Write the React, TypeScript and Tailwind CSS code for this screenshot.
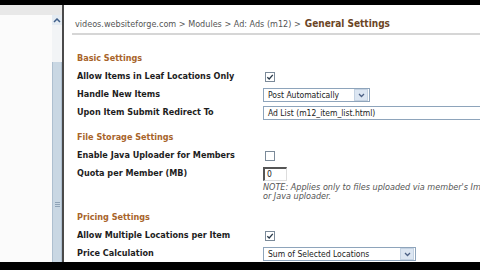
import React from 'react';

const Checkbox: React.FC<{ checked?: boolean }> = ({ checked }) => (
  <div className="ml-[2px] w-[10px] h-[10px] border border-[#7b8a99] bg-white flex items-center justify-center">
    {checked && (
      <svg width="8" height="8" viewBox="0 0 8 8">
        <path d="M1.3 4.2 L3.2 6 L6.8 1.8" fill="none" stroke="#2a3a4a" strokeWidth="1.3" />
      </svg>
    )}
  </div>
);

const Select: React.FC<{ value: string; width: string; arrow?: boolean }> = ({ value, width, arrow = true }) => (
  <div className={`${width} h-[14px] border border-[#8ea4bb] bg-white flex items-center shrink-0`}>
    <span className="flex-1 pl-[4px] text-[8.5px] text-[#222] whitespace-nowrap overflow-hidden leading-[12px]">{value}</span>
    {arrow && (
      <div className="w-[14px] h-[12px] mr-[1px] bg-[#dce6f2] border border-[#c4d2e2] flex items-center justify-center">
        <svg width="7" height="5" viewBox="0 0 7 5">
          <path d="M1 1 L3.5 3.5 L6 1" fill="none" stroke="#4d6185" strokeWidth="1.3" />
        </svg>
      </div>
    )}
  </div>
);

const Row: React.FC<{ label: string; children: React.ReactNode }> = ({ label, children }) => (
  <div className="h-[18px] flex items-center">
    <div className="w-[186px] shrink-0 font-bold text-[9px] text-[#1d1d1d]">{label}</div>
    {children}
  </div>
);

const Header: React.FC<{ title: string }> = ({ title }) => (
  <div className="h-[18px] flex items-center font-bold text-[9px] text-[#a8642a]">{title}</div>
);

export default function App() {
  return (
    <div className="w-[480px] h-[270px] overflow-hidden flex flex-col bg-black font-['DejaVu_Sans_Condensed','DejaVu_Sans',sans-serif] text-[8px]">
      <div className="h-[5px] shrink-0" />
      <div className="flex-1 flex bg-white overflow-hidden">
        {/* left frame */}
        <div className="w-[52px] shrink-0 flex flex-col">
          <div className="h-[10px] bg-[#e8e8e8]" />
          <div className="flex-1 bg-[#fbfbfb]" />
        </div>
        {/* scrollbar */}
        <div className="w-[10px] shrink-0 flex flex-col bg-[#f2f4f6]">
          <div className="h-[10px] bg-[#e8e8e8]" />
          <div className="h-[10px] flex items-center justify-center bg-[#e4ebf2]">
            <svg width="8" height="5" viewBox="0 0 8 5">
              <path d="M1 4 L4 1 L7 4" fill="none" stroke="#3f5f8a" strokeWidth="1.5" />
            </svg>
          </div>
          <div className="h-[37px]" />
          <div className="flex-1 bg-[#c9d7e3] border-x border-[#aebfcf] flex flex-col items-center justify-center gap-[1px]">
            <div className="h-[84px]" />
            <div className="w-[5px] h-px bg-[#8fa3b6]" />
            <div className="w-[5px] h-px bg-[#8fa3b6]" />
            <div className="w-[5px] h-px bg-[#8fa3b6]" />
          </div>
        </div>
        <div className="w-[2px] shrink-0 bg-[#4a4a4a]" />
        {/* content */}
        <div className="flex-1 flex flex-col pl-[8px] overflow-hidden">
          <div className="h-[30px] shrink-0 flex items-end pb-[4px] pl-[3px] border-b-2 border-[#d6d6d6] whitespace-nowrap">
            <span className="text-[#555] text-[9px] leading-none">videos.websiteforge.com &gt; Modules &gt; Ad: Ads (m12) &gt;</span>
            <span className="ml-[4px] font-bold text-[10px] text-[#6b4525] leading-none">General Settings</span>
          </div>
          <div className="pl-[5px] flex flex-col">
            <div className="h-[15px]" />
            <Header title="Basic Settings" />
            <Row label="Allow Items in Leaf Locations Only"><Checkbox checked /></Row>
            <Row label="Handle New Items"><Select value="Post Automatically" width="w-[107px]" /></Row>
            <Row label="Upon Item Submit Redirect To"><Select value="Ad List (m12_item_list.html)" width="w-[240px]" arrow={false} /></Row>
            <div className="h-[7px]" />
            <Header title="File Storage Settings" />
            <Row label="Enable Java Uploader for Members"><Checkbox /></Row>
            <Row label="Quota per Member (MB)">
              <div className="w-[24px] h-[14px] border-t-2 border-l-2 border-t-[#555] border-l-[#555] border-r border-b border-r-[#ddd] border-b-[#ddd] bg-white text-[8.5px] pl-[2px] leading-[11px] text-[#222]">0</div>
            </Row>
            <div className="pl-[186px] italic text-[9px] text-[#555] leading-[9px] whitespace-nowrap">
              <div>NOTE: Applies only to files uploaded via member's Image Uploader</div>
              <div>or Java uploader.</div>
            </div>
            <div className="h-[8px]" />
            <Header title="Pricing Settings" />
            <Row label="Allow Multiple Locations per Item"><Checkbox checked /></Row>
            <Row label="Price Calculation"><Select value="Sum of Selected Locations" width="w-[153px]" /></Row>
          </div>
        </div>
      </div>
      <div className="h-[8px] shrink-0" />
    </div>
  );
}
